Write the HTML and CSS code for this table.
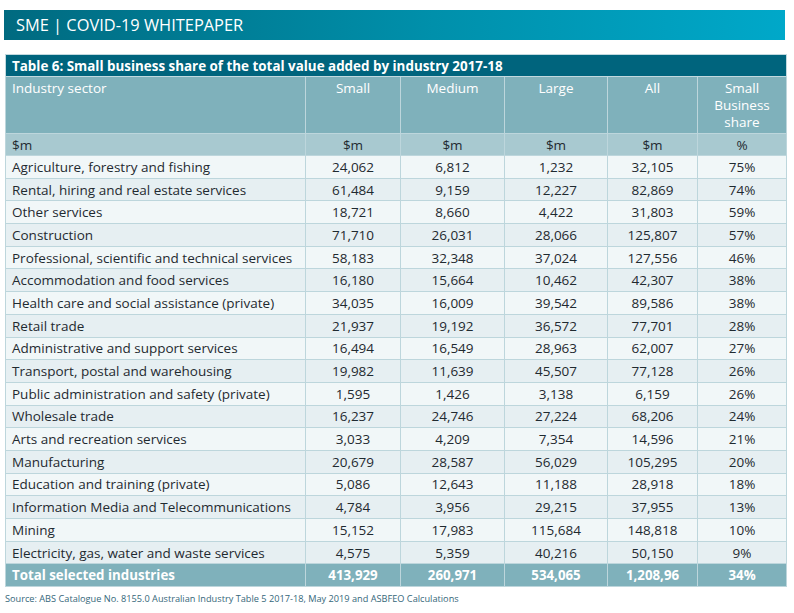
FILE: index.html
```html
<!DOCTYPE html>
<html>
<head>
<meta charset="utf-8">
<link rel="stylesheet" href="styles.css">
</head>
<body>
<div class="page">
  <header class="banner">SME | COVID-19 WHITEPAPER</header>
  <table class="data">
    <colgroup>
      <col class="c-sector"><col class="c-small"><col class="c-medium"><col class="c-large"><col class="c-all"><col class="c-share">
    </colgroup>
    <thead>
      <tr class="title-row"><th colspan="6">Table 6: Small business share of the total value added by industry 2017-18</th></tr>
      <tr class="head-row">
        <th class="left">Industry sector</th><th>Small</th><th>Medium</th><th>Large</th><th>All</th><th>Small<br>Business<br>share</th>
      </tr>
      <tr class="unit-row">
        <td class="left">$m</td><td>$m</td><td>$m</td><td>$m</td><td>$m</td><td>%</td>
      </tr>
    </thead>
    <tbody>
      <tr><td class="left">Agriculture, forestry and fishing</td><td>24,062</td><td>6,812</td><td>1,232</td><td>32,105</td><td>75%</td></tr>
      <tr><td class="left">Rental, hiring and real estate services</td><td>61,484</td><td>9,159</td><td>12,227</td><td>82,869</td><td>74%</td></tr>
      <tr><td class="left">Other services</td><td>18,721</td><td>8,660</td><td>4,422</td><td>31,803</td><td>59%</td></tr>
      <tr><td class="left">Construction</td><td>71,710</td><td>26,031</td><td>28,066</td><td>125,807</td><td>57%</td></tr>
      <tr><td class="left">Professional, scientific and technical services</td><td>58,183</td><td>32,348</td><td>37,024</td><td>127,556</td><td>46%</td></tr>
      <tr><td class="left">Accommodation and food services</td><td>16,180</td><td>15,664</td><td>10,462</td><td>42,307</td><td>38%</td></tr>
      <tr><td class="left">Health care and social assistance (private)</td><td>34,035</td><td>16,009</td><td>39,542</td><td>89,586</td><td>38%</td></tr>
      <tr><td class="left">Retail trade</td><td>21,937</td><td>19,192</td><td>36,572</td><td>77,701</td><td>28%</td></tr>
      <tr><td class="left">Administrative and support services</td><td>16,494</td><td>16,549</td><td>28,963</td><td>62,007</td><td>27%</td></tr>
      <tr><td class="left">Transport, postal and warehousing</td><td>19,982</td><td>11,639</td><td>45,507</td><td>77,128</td><td>26%</td></tr>
      <tr><td class="left">Public administration and safety (private)</td><td>1,595</td><td>1,426</td><td>3,138</td><td>6,159</td><td>26%</td></tr>
      <tr><td class="left">Wholesale trade</td><td>16,237</td><td>24,746</td><td>27,224</td><td>68,206</td><td>24%</td></tr>
      <tr><td class="left">Arts and recreation services</td><td>3,033</td><td>4,209</td><td>7,354</td><td>14,596</td><td>21%</td></tr>
      <tr><td class="left">Manufacturing</td><td>20,679</td><td>28,587</td><td>56,029</td><td>105,295</td><td>20%</td></tr>
      <tr><td class="left">Education and training (private)</td><td>5,086</td><td>12,643</td><td>11,188</td><td>28,918</td><td>18%</td></tr>
      <tr><td class="left">Information Media and Telecommunications</td><td>4,784</td><td>3,956</td><td>29,215</td><td>37,955</td><td>13%</td></tr>
      <tr><td class="left">Mining</td><td>15,152</td><td>17,983</td><td>115,684</td><td>148,818</td><td>10%</td></tr>
      <tr><td class="left">Electricity, gas, water and waste services</td><td>4,575</td><td>5,359</td><td>40,216</td><td>50,150</td><td>9%</td></tr>
    </tbody>
    <tfoot>
      <tr class="total-row"><td class="left">Total selected industries</td><td>413,929</td><td>260,971</td><td>534,065</td><td>1,208,96</td><td>34%</td></tr>
    </tfoot>
  </table>
  <p class="source">Source: ABS Catalogue No. 8155.0 Australian Industry Table 5 2017-18, May 2019 and ASBFEO Calculations</p>
</div>
</body>
</html>
```
FILE: styles.css
```css
html, body {
  margin: 0;
  padding: 0;
  background: #ffffff;
}
body {
  font-family: "Open Sans", "Noto Sans", sans-serif;
  color: #1f2a30;
}
.page {
  padding: 10px 8px 0 4px;
}
.banner {
  height: 30px;
  width: 781px;
  box-sizing: border-box;
  padding-left: 12px;
  line-height: 30px;
  font-size: 16.4px;
  color: #ffffff;
  background: linear-gradient(to right, #006a80 0%, #0090ab 55%, #00a8c9 100%);
}
.data {
  margin-top: 14px;
  margin-left: 1px;
  width: 781px;
  border-collapse: collapse;
  table-layout: fixed;
  font-size: 13.5px;
  line-height: 16px;
  border: 1px solid #c2d9df;
}
.c-sector { width: 300px; }
.c-small { width: 95px; }
.c-medium { width: 104px; }
.c-large { width: 103px; }
.c-all { width: 90px; }
.c-share { width: 89px; }
.data td, .data th {
  border: 1px solid #bdd6dc;
  padding: 0 6px;
  text-align: center;
  font-weight: normal;
}
.data .left { text-align: left; }
.title-row th {
  background: #00647d;
  color: #ffffff;
  font-weight: bold;
  text-align: left;
  height: 21px;
  font-size: 13.4px;
  padding: 0 6px;
  border-color: #c2d9df;
}
.head-row th {
  background: #7fb1bb;
  color: #ffffff;
  vertical-align: top;
  height: 53px;
  line-height: 17px;
  font-size: 13.5px;
  padding-top: 3px;
}
.unit-row td {
  background: #a8c9d0;
  height: 21px;
}
tbody tr td { height: 21.7px; }
tbody tr:nth-child(odd) td { background: #f1f7f8; }
tbody tr:nth-child(even) td { background: #e6eff2; }
.total-row td {
  background: #7fb1bb;
  color: #ffffff;
  font-weight: bold;
  font-size: 13.3px;
  height: 21.5px;
}
.source {
  margin: 5px 0 0 1px;
  font-size: 9.2px;
  color: #35677a;
}
```
